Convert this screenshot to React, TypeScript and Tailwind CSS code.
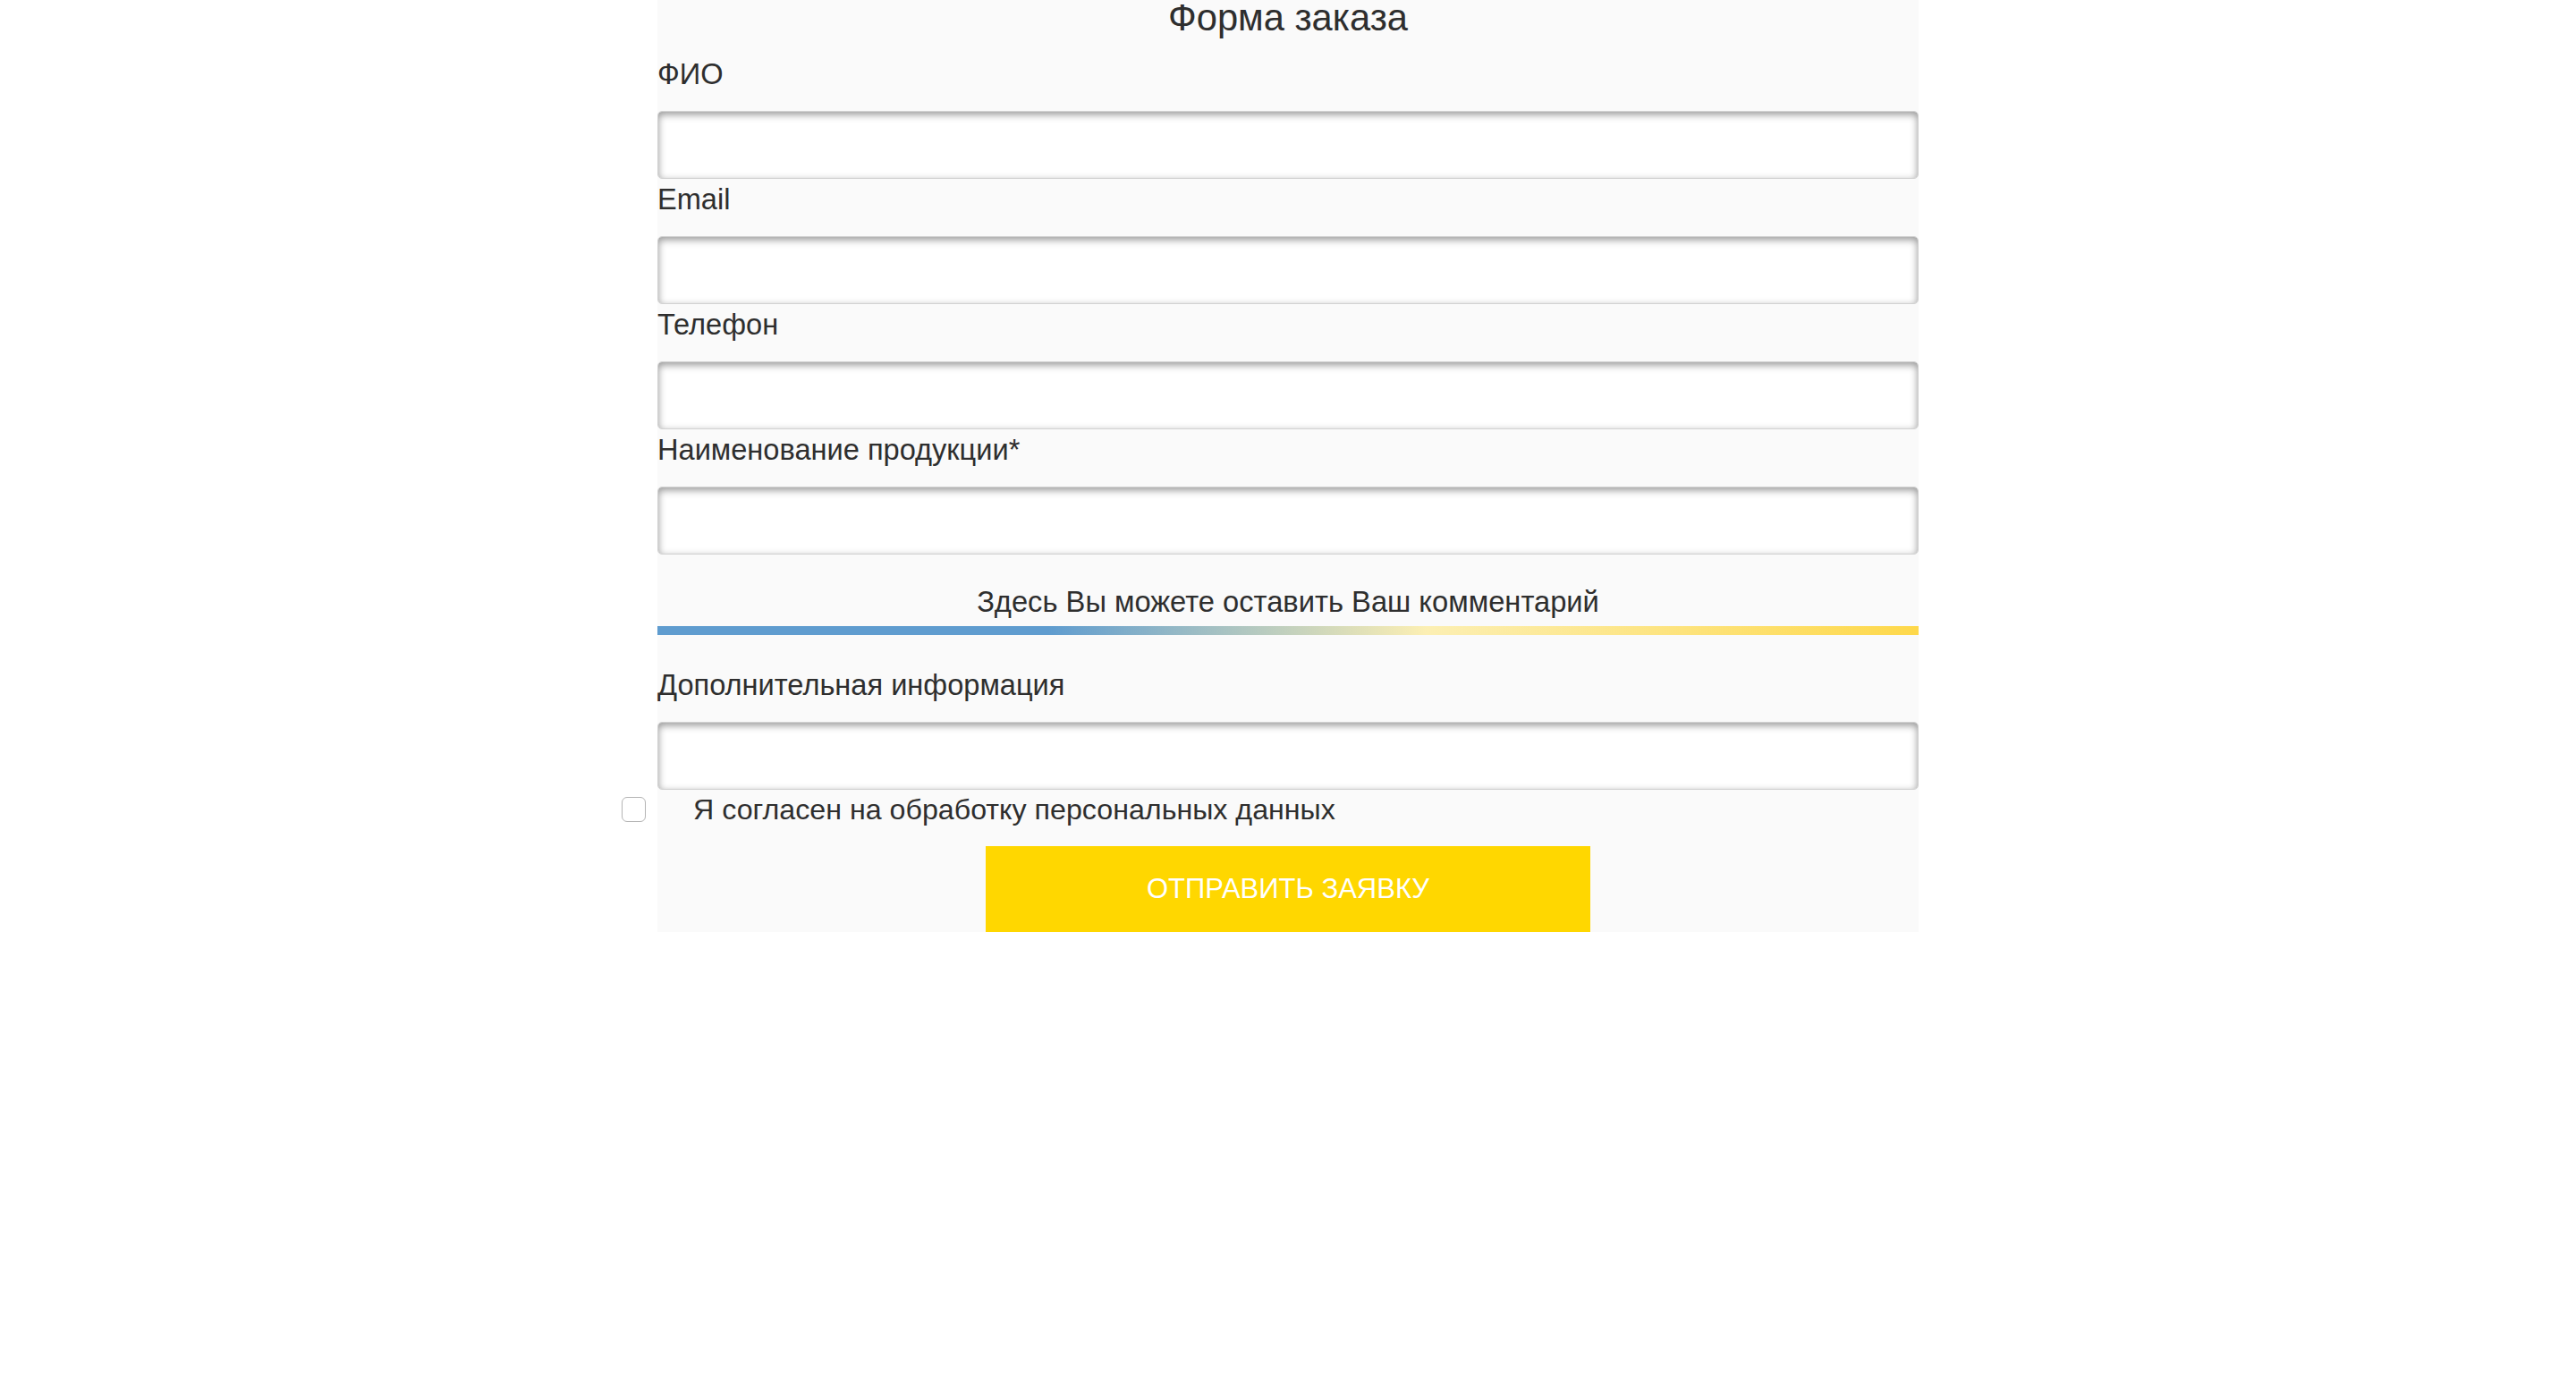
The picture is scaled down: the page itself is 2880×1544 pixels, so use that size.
const fields = ['ФИО', 'Email', 'Телефон', 'Наименование продукции*'];

function Field({ label }: { label: string }) {
  return (
    <div>
      <label className="block text-[32.6px] leading-[46px]">{label}</label>
      <input
        type="text"
        className="mt-[18px] block h-[76px] w-full rounded-[5px] border border-[#d2d2d2] bg-white px-4 text-[28px] shadow-[inset_0_3px_8px_rgba(0,0,0,0.42)] outline-none"
      />
    </div>
  );
}

export default function App() {
  return (
    <div className="min-h-screen bg-white font-['Liberation_Sans',Arial,sans-serif] text-[#2e2e2e]">
      <form className="mx-auto w-[1410px] bg-[#fafafa]" onSubmit={(e) => e.preventDefault()}>
        <h2 className="text-center text-[41.7px] leading-[40px]">Форма заказа</h2>
        <div className="mt-[20px]">
          {fields.map((f) => (
            <Field key={f} label={f} />
          ))}
        </div>

        <div className="mt-[30px] text-center text-[32.7px] leading-[46px]">
          Здесь Вы можете оставить Ваш комментарий
        </div>
        <div className="mt-[4px] h-[10px] bg-[linear-gradient(to_right,#5f9ccf_0%,#5f9ccf_31%,#fcefb3_61%,#fed84a_100%)]" />

        <div className="mt-[33px]">
          <Field label="Дополнительная информация" />
        </div>

        <label className="-ml-[40px] flex items-center gap-[53px] text-[32.2px] leading-[44px]">
          <input
            type="checkbox"
            className="h-[28px] w-[27px] shrink-0 appearance-none rounded-[6px] border border-[#b4b4b4] bg-white"
          />
          <span>Я согласен на обработку персональных данных</span>
        </label>

        <div className="mt-[19px] flex justify-center">
          <button
            type="submit"
            className="h-[96px] w-[676px] bg-[#ffd700] text-[31px] uppercase text-white"
          >
            Отправить заявку
          </button>
        </div>
      </form>
    </div>
  );
}
